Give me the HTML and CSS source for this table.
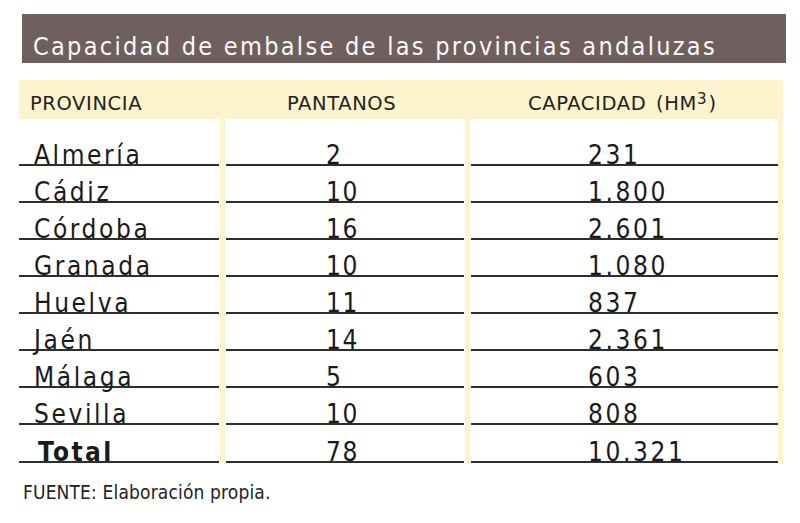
FILE: index.html
```html
<!DOCTYPE html>
<html lang="es">
<head>
<meta charset="utf-8">
<title>Capacidad de embalse</title>
<link rel="stylesheet" href="styles.css">
</head>
<body>
<div class="page">
  <div class="title">Capacidad de embalse de las provincias andaluzas</div>
  <div class="head">
    <div class="hc c1">PROVINCIA</div>
    <div class="hgap"></div>
    <div class="hc c2">PANTANOS</div>
    <div class="hgap"></div>
    <div class="hc c3">CAPACIDAD (HM<sup>3</sup>)</div>
    <div class="hend"></div>
  </div>
  <div class="body">
    <div class="col c1">
      <div class="cell first">Almería</div>
      <div class="cell">Cádiz</div>
      <div class="cell">Córdoba</div>
      <div class="cell">Granada</div>
      <div class="cell">Huelva</div>
      <div class="cell">Jaén</div>
      <div class="cell">Málaga</div>
      <div class="cell">Sevilla</div>
      <div class="cell total">Total</div>
    </div>
    <div class="sep"><div class="bar"></div></div>
    <div class="col c2">
      <div class="cell first">2</div>
      <div class="cell">10</div>
      <div class="cell">16</div>
      <div class="cell">10</div>
      <div class="cell">11</div>
      <div class="cell">14</div>
      <div class="cell">5</div>
      <div class="cell">10</div>
      <div class="cell last">78</div>
    </div>
    <div class="sep"><div class="bar"></div></div>
    <div class="col c3">
      <div class="cell first">231</div>
      <div class="cell">1.800</div>
      <div class="cell">2.601</div>
      <div class="cell">1.080</div>
      <div class="cell">837</div>
      <div class="cell">2.361</div>
      <div class="cell">603</div>
      <div class="cell">808</div>
      <div class="cell last">10.321</div>
    </div>
    <div class="bar end"></div>
  </div>
  <div class="source">FUENTE: Elaboración propia.</div>
</div>
</body>
</html>
```
FILE: styles.css
```css
html, body {
  margin: 0;
  padding: 0;
  background: #ffffff;
}

.page {
  width: 800px;
  height: 523px;
  padding-top: 14px;
  box-sizing: border-box;
  font-family: "DejaVu Sans Condensed", "DejaVu Sans", sans-serif;
  color: #1a1a1a;
}

.title {
  margin-left: 22px;
  width: 764px;
  height: 49px;
  box-sizing: border-box;
  background: #6f5f5e;
  color: #fbfbfb;
  font-size: 25px;
  letter-spacing: 2.3px;
  line-height: 18px;
  padding-left: 11px;
  padding-bottom: 7px;
  display: flex;
  align-items: flex-end;
  white-space: nowrap;
}

.head {
  margin-top: 17px;
  margin-left: 19px;
  width: 764px;
  height: 39px;
  background: #fdf3cc;
  display: flex;
  font-family: "DejaVu Sans", sans-serif;
  font-size: 19.5px;
  letter-spacing: 0.6px;
  color: #222;
}

.hc {
  line-height: 14px;
  padding-top: 17px;
  box-sizing: border-box;
  white-space: nowrap;
}

.hc .sp { margin-left: 2px; }

.hc sup {
  font-size: 15px;
  line-height: 0;
  vertical-align: 6px;
  letter-spacing: 0;
  margin-right: 2px;
}

.hc.c1 { width: 200px; padding-left: 11px; }
.hgap { width: 7px; }
.hc.c2 { width: 238px; padding-left: 61px; }
.hc.c3 { width: 307px; padding-left: 57px; word-spacing: 3px; }
.hend { width: 5px; }

.body {
  margin-left: 19px;
  width: 764px;
  display: flex;
}

.col {
  display: flex;
  flex-direction: column;
}

.col.c1 { width: 200px; }
.col.c2 { width: 238px; }
.col.c3 { width: 307px; }

.sep {
  width: 7px;
  display: flex;
  padding-right: 1px;
  padding-left: 1px;
  box-sizing: border-box;
}

.sep .bar { flex: 1; }

.bar {
  background: #fdf3cc;
}

.bar.end {
  width: 5px;
}

.cell {
  height: 37px;
  box-sizing: border-box;
  border-bottom: 2px solid #2e2e2e;
  display: flex;
  align-items: flex-end;
  line-height: 18px;
  font-size: 26px;
  letter-spacing: 2.6px;
  white-space: nowrap;
}

.cell.first { height: 47px; }
.cell.total, .cell.last { height: 38px; }

.c1 .cell { padding-left: 15px; }
.c1 .cell.total {
  padding-left: 19px;
  font-weight: bold;
  letter-spacing: 2.4px;
}
.c2 .cell { padding-left: 100px; letter-spacing: 1.6px; }
.c3 .cell { padding-left: 117px; }

.source {
  margin-left: 23px;
  margin-top: 20px;
  font-size: 19px;
  line-height: 18px;
  letter-spacing: 0.15px;
  color: #222;
}
```
